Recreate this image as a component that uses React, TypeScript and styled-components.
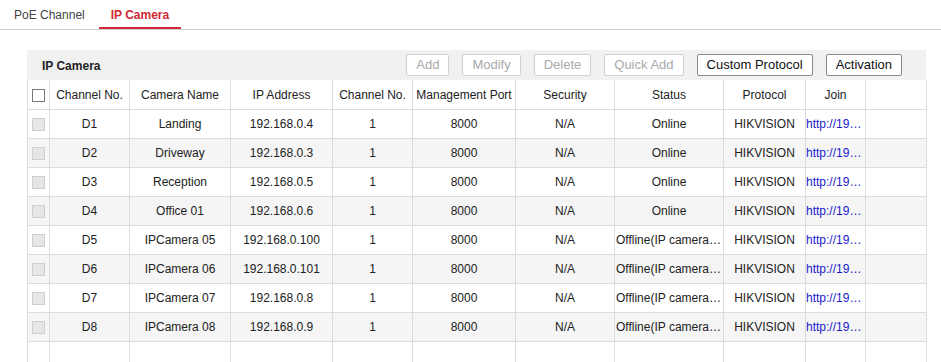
import React from "react";
import styled, { createGlobalStyle } from "styled-components";

const Global = createGlobalStyle`
  html, body { margin: 0; padding: 0; background: #fff; }
  body { font-family: "Liberation Sans", Arial, sans-serif; font-size: 12px; color: #222; }
`;

const Page = styled.div`
  width: 941px;
  height: 362px;
  overflow: hidden;
`;

const TabBar = styled.div`
  display: flex;
  align-items: flex-end;
  height: 29px;
  border-bottom: 1px solid #cfcfcf;
  padding-left: 2px;
  gap: 2px;
`;

const Tab = styled.div<{ $active?: boolean }>`
  height: 29px;
  box-sizing: border-box;
  padding: 8px 12px 0;
  font-size: 12px;
  color: ${(p) => (p.$active ? "#cf2a36" : "#444")};
  font-weight: ${(p) => (p.$active ? "bold" : "normal")};
  border-bottom: 2px solid ${(p) => (p.$active ? "#cf2a36" : "transparent")};
  cursor: pointer;
`;

const Panel = styled.div`
  margin: 20px 15px 0 27px;
`;

const PanelHeader = styled.div`
  display: flex;
  align-items: center;
  height: 30px;
  background: #f1f1f1;
  padding: 0 24px 0 15px;
  gap: 13px;
`;

const PanelTitle = styled.div`
  font-weight: bold;
  font-size: 12px;
  color: #222;
  flex: 1;
  padding-top: 1px;
`;

const Btn = styled.button<{ $disabled?: boolean }>`
  height: 22px;
  margin-top: -1px;
  padding: 0 9px;
  font-family: "Liberation Sans", Arial, sans-serif;
  font-size: 13px;
  background: #fff;
  border: 1px solid ${(p) => (p.$disabled ? "#d0d0d0" : "#8a8a8a")};
  color: ${(p) => (p.$disabled ? "#a9a9a9" : "#111")};
  border-radius: 2px;
  cursor: ${(p) => (p.$disabled ? "default" : "pointer")};
`;

const Table = styled.table`
  border-collapse: collapse;
  table-layout: fixed;
  width: 899px;
`;

const HeadCell = styled.th`
  height: 29px;
  padding: 0 2px;
  font-weight: normal;
  font-size: 12px;
  color: #222;
  text-align: center;
  border: 1px solid #dcdcdc;
  border-top: none;
  white-space: nowrap;
  overflow: hidden;
  background: #fff;
`;

const Row = styled.tr<{ $alt?: boolean }>`
  background: ${(p) => (p.$alt ? "#f5f5f5" : "#fff")};
`;

const Cell = styled.td<{ $link?: boolean }>`
  height: 28px;
  padding: 0 ${(p) => (p.$link ? "0" : "1px")};
  text-align: center;
  border: 1px solid #dcdcdc;
  white-space: nowrap;
  overflow: hidden;
  text-overflow: ellipsis;
  color: ${(p) => (p.$link ? "#1a1acc" : "#222")};
`;

const FillerCell = styled.td`
  height: 40px;
  border: 1px solid #dcdcdc;
  border-bottom: none;
`;

const Check = styled.span<{ $disabled?: boolean }>`
  display: inline-block;
  width: 11px;
  height: 11px;
  vertical-align: middle;
  border: 1px solid ${(p) => (p.$disabled ? "#cfcfcf" : "#777")};
  background: ${(p) => (p.$disabled ? "#e6e6e6" : "#fff")};
`;

const widths = [22, 80, 101, 102, 80, 103, 99, 109, 82, 60, 61];
const headers = [
  "Channel No.",
  "Camera Name",
  "IP Address",
  "Channel No.",
  "Management Port",
  "Security",
  "Status",
  "Protocol",
  "Join",
  "",
];

const rows = [
  ["D1", "Landing", "192.168.0.4", "Online"],
  ["D2", "Driveway", "192.168.0.3", "Online"],
  ["D3", "Reception", "192.168.0.5", "Online"],
  ["D4", "Office 01", "192.168.0.6", "Online"],
  ["D5", "IPCamera 05", "192.168.0.100", "Offline(IP camera not connected)"],
  ["D6", "IPCamera 06", "192.168.0.101", "Offline(IP camera not connected)"],
  ["D7", "IPCamera 07", "192.168.0.8", "Offline(IP camera not connected)"],
  ["D8", "IPCamera 08", "192.168.0.9", "Offline(IP camera not connected)"],
];

export default function App() {
  return (
    <Page>
      <Global />
      <TabBar>
        <Tab>PoE Channel</Tab>
        <Tab $active>IP Camera</Tab>
      </TabBar>
      <Panel>
        <PanelHeader>
          <PanelTitle>IP Camera</PanelTitle>
          <Btn $disabled>Add</Btn>
          <Btn $disabled>Modify</Btn>
          <Btn $disabled>Delete</Btn>
          <Btn $disabled>Quick Add</Btn>
          <Btn>Custom Protocol</Btn>
          <Btn>Activation</Btn>
        </PanelHeader>
        <Table>
          <colgroup>
            {widths.map((w, i) => (
              <col key={i} style={{ width: w }} />
            ))}
          </colgroup>
          <thead>
            <tr>
              <HeadCell>
                <Check />
              </HeadCell>
              {headers.map((h, i) => (
                <HeadCell key={i}>{h}</HeadCell>
              ))}
            </tr>
          </thead>
          <tbody>
            {rows.map((r, i) => (
              <Row key={r[0]} $alt={i % 2 === 1}>
                <Cell>
                  <Check $disabled />
                </Cell>
                <Cell>{r[0]}</Cell>
                <Cell>{r[1]}</Cell>
                <Cell>{r[2]}</Cell>
                <Cell>1</Cell>
                <Cell>8000</Cell>
                <Cell>N/A</Cell>
                <Cell>{r[3]}</Cell>
                <Cell>HIKVISION</Cell>
                <Cell $link>{`http://${r[2]}`}</Cell>
                <Cell />
              </Row>
            ))}
            <tr>
              {widths.map((_, i) => (
                <FillerCell key={i} />
              ))}
            </tr>
          </tbody>
        </Table>
      </Panel>
    </Page>
  );
}
